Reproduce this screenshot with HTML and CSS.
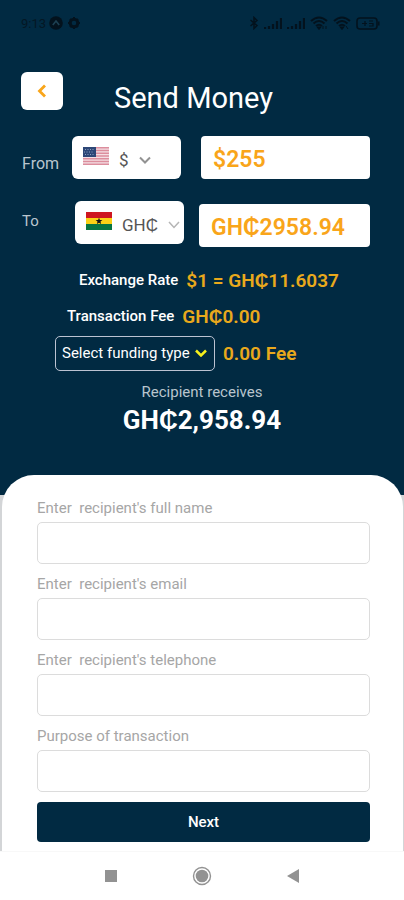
FILE: index.html
```html
<!DOCTYPE html>
<html lang="en">
<head>
<meta charset="utf-8">
<meta name="viewport" content="width=device-width, initial-scale=1">
<title>Send Money</title>
<link rel="stylesheet" href="styles.css">
</head>
<body>
<div class="status">
  <span class="status-time">9:13</span>
  <svg class="status-app" width="14" height="14" viewBox="0 0 14 14"><circle cx="7" cy="7" r="6.8" fill="#03121d"/><path d="M3.8 9 7 5l3.2 4" fill="none" stroke="#1d4052" stroke-width="1.6"/></svg>
  <svg width="12" height="12" viewBox="0 0 12 12"><circle cx="6" cy="6" r="3.8" fill="none" stroke="#03121d" stroke-width="3"/><path d="M6 0v2M6 10v2M0 6h2M10 6h2M2 2l1 1M9 9l1 1M2 10l1-1M9 3l1-1" stroke="#03121d" stroke-width="2"/></svg>
  <div class="status-right">
    <svg width="10" height="14" viewBox="0 0 10 14"><path d="M1.5 4 8 9.500 5 12.500v-11L8 4.500 1.500 10" fill="none" stroke="#03121d" stroke-width="1.500"/></svg>
    <svg width="18" height="12" viewBox="0 0 18 12"><path d="M1 12v-2M5 12V9M9 12V7M13 12V4M17 12V1" stroke="#03121d" stroke-width="2.200"/></svg>
    <svg width="18" height="12" viewBox="0 0 18 12"><path d="M1 12v-2M5 12V9M9 12V7M13 12V4M17 12V1" stroke="#03121d" stroke-width="2.200"/></svg>
    <svg width="18" height="14" viewBox="0 0 18 14"><path d="M1 5q8-7 16 0M3.500 7.500q5.500-5 11 0M6 10q3-2.500 6 0" fill="none" stroke="#03121d" stroke-width="2"/><path d="m7 11 2 2.500 2-2.500zM13 10v3M16 10v3" fill="#03121d" stroke="#03121d"/></svg>
    <svg width="18" height="14" viewBox="0 0 18 14"><path d="M1 5q8-7 16 0M3.500 7.500q5.500-5 11 0M6 10q3-2.500 6 0" fill="none" stroke="#03121d" stroke-width="2"/><path d="m7 11 2 2.500 2-2.500zM13 10l2 3" fill="#03121d" stroke="#03121d"/></svg>
    <svg width="24" height="13" viewBox="0 0 24 13"><rect x="1" y="1" width="20" height="11" rx="3" fill="none" stroke="#03121d" stroke-width="1.600"/><path d="M22.800 4.500v4" stroke="#03121d" stroke-width="1.500"/><path d="M6 6.500h5M9 4v5M13 4h4M13 6.500h4v2.500h-4" fill="none" stroke="#03121d" stroke-width="1.200"/></svg>
  </div>
</div>

<header class="header">
  <button class="back" type="button" aria-label="Back">
    <svg width="10" height="14" viewBox="0 0 10 14"><path d="M8 1.500 2.500 7 8 12.500" fill="none" stroke="#f9a51a" stroke-width="2.800"/></svg>
  </button>
  <h1 class="title">Send Money</h1>
</header>

<main>
  <section class="convert">
    <div class="row">
      <label class="row-label" for="from-currency">From</label>
      <div class="currency">
        <svg width="26" height="18" viewBox="0 0 26 18"><path fill="#f5dfe4" d="M0 0h26v18H0z"/><path d="M0 .7h26M0 3.500h26M0 6.300h26M0 9h26M0 11.800h26M0 14.500h26M0 17.300h26" stroke="#dc8e9d" stroke-width="1.400"/><path fill="#2d4777" d="M0 0h13v10H0z"/><path d="M2 2.500h10M1 5h10M2 7.500h10" stroke="#8ca0c2" stroke-dasharray="1 1.500"/></svg>
        <select id="from-currency" class="currency-select currency-usd"><option>$</option></select>
        <svg width="12" height="8" viewBox="0 0 12 8"><path d="m1 1.500 5 5 5-5" fill="none" stroke="#929292" stroke-width="2"/></svg>
      </div>
      <input class="amount" aria-label="Amount to send" value="$255">
    </div>
    <div class="row row-to">
      <label class="row-label" for="to-currency">To</label>
      <div class="currency">
        <svg width="26" height="18" viewBox="0 0 26 18"><path fill="#ce1620" d="M0 0h26v6H0z"/><path fill="#fbd116" d="M0 6h26v6H0z"/><path fill="#087542" d="M0 12h26v6H0z"/><path d="m13 5.700.9 2.200 2.500.2-1.900 1.500.6 2.400-2.100-1.300-2.100 1.300.6-2.400-1.900-1.500 2.500-.2z" fill="#161616"/></svg>
        <select id="to-currency" class="currency-select"><option>GH₵</option></select>
        <svg width="12" height="8" viewBox="0 0 12 8"><path d="m1 1 5 5.500L11 1" fill="none" stroke="#b5b5b5" stroke-width="1.500"/></svg>
      </div>
      <input class="amount" aria-label="Amount received" value="GH₵2958.94">
    </div>
  </section>

  <section class="summary">
    <p class="line line-rate"><span class="line-name">Exchange Rate</span><span class="line-value">$1 = GH₵11.6037</span></p>
    <p class="line line-fee"><span class="line-name">Transaction Fee</span><span class="line-value">GH₵0.00</span></p>
    <div class="line line-funding">
      <div class="funding">
        <select class="funding-select" aria-label="Funding type"><option>Select funding type</option></select>
        <svg class="funding-arrow" width="12" height="8" viewBox="0 0 12 8"><path d="m1 1.500 5 5 5-5" fill="none" stroke="#f6f01c" stroke-width="2.500"/></svg>
      </div>
      <span class="line-value">0.00 Fee</span>
    </div>
    <p class="receives">Recipient receives</p>
    <p class="total">GH₵2,958.94</p>
  </section>

  <div class="sheet-edge">
    <form class="sheet">
      <div class="field"><label for="name">Enter&nbsp; recipient's full name</label><input id="name" type="text"></div>
      <div class="field"><label for="email">Enter&nbsp; recipient's email</label><input id="email" type="email"></div>
      <div class="field"><label for="phone">Enter&nbsp; recipient's telephone</label><input id="phone" type="tel"></div>
      <div class="field"><label for="purpose">Purpose of transaction</label><input id="purpose" type="text"></div>
      <button class="next" type="button">Next</button>
    </form>
  </div>
</main>

<nav class="system-nav">
  <button type="button" aria-label="Recent apps"><svg width="20" height="20" viewBox="0 0 20 20"><path d="M4 4h12v12H4z" fill="#929292"/></svg></button>
  <button type="button" aria-label="Home"><svg width="20" height="20" viewBox="0 0 20 20"><circle cx="10" cy="10" r="8.500" fill="none" stroke="#929292" stroke-width="1.400"/><circle cx="10" cy="10" r="6.300" fill="#929292"/></svg></button>
  <button type="button" aria-label="Go back"><svg width="20" height="20" viewBox="0 0 20 20"><path d="M16 3v14L4 10z" fill="#929292"/></svg></button>
</nav>
</body>
</html>
```
FILE: styles.css
```css
* {
  box-sizing: border-box;
}

body {
  margin: 0;
  min-height: 100vh;
  background: #012a42;
  color: #fff;
  font-family: Roboto, "Liberation Sans", sans-serif;
}

h1,
p {
  margin: 0;
}

button,
input,
select {
  font-family: inherit;
  margin: 0;
}

svg {
  display: block;
  flex: none;
}

.status {
  display: flex;
  align-items: center;
  gap: 6px;
  height: 46px;
  padding: 0 24px 0 21px;
}

.status-time {
  color: #041724;
  font-size: 13px;
}

.status-time + .status-app {
  margin: 0 -1px 0 -3px;
}

.status-right {
  display: flex;
  align-items: center;
  gap: 5px;
  margin-left: auto;
}

.header {
  display: flex;
  align-items: center;
  gap: 51px;
  padding: 24px 21px 0;
}

.back {
  display: flex;
  align-items: center;
  justify-content: center;
  width: 42px;
  height: 38px;
  padding: 0;
  border: 0;
  border-radius: 6px;
  background: #fff;
}

.title {
  padding-top: 14px;
  font-size: 29px;
  line-height: 28px;
  font-weight: 400;
}

.convert {
  display: grid;
  gap: 22px;
  padding: 24px 34px 0 22px;
}

.row {
  display: grid;
  grid-template-columns: 50px 109px 1fr;
  align-items: center;
}

.row-to {
  grid-template-columns: 53px 109px 1fr;
  align-items: start;
}

.row-label {
  padding-top: 12px;
  color: #b9c5ce;
  font-size: 16px;
  line-height: 20px;
}

.row-to .row-label {
  padding-top: 10px;
  font-size: 15px;
}

.currency {
  display: flex;
  align-items: center;
  gap: 10px;
  height: 43px;
  padding: 4px 10px 0 11px;
  border-radius: 6px;
  background: #fff;
}

.currency > svg:first-child {
  margin-bottom: 8px;
}

.currency-select {
  appearance: none;
  width: 36px;
  padding: 0;
  border: 0;
  background: transparent;
  color: #555;
  font-size: 17px;
}

.currency-usd {
  width: 10px;
}

.amount {
  width: auto;
  min-width: 0;
  height: 43px;
  margin-left: 20px;
  padding: 4px 12px 0;
  border: 0;
  border-radius: 4px;
  background: #fff;
  color: #f9a51a;
  font-size: 23px;
  font-weight: 600;
}

.row-to .amount {
  margin: 3px 0 0 15px;
}

.summary {
  display: flex;
  flex-direction: column;
  padding-top: 15px;
}

.line {
  display: flex;
  align-items: center;
  gap: 8px;
  height: 36px;
}

.line-rate {
  padding-left: 79px;
}

.line-fee {
  padding-left: 67px;
}

.line-funding {
  height: 38px;
  padding-left: 55px;
}

.line-name {
  font-size: 15px;
  font-weight: 500;
}

.line-value {
  color: #e9a91c;
  font-size: 19px;
  font-weight: 600;
}

.funding {
  display: grid;
  grid-template-columns: 1fr;
  align-items: center;
  width: 160px;
  height: 35px;
}

.funding-select {
  grid-area: 1 / 1;
  appearance: none;
  width: 100%;
  height: 35px;
  padding: 0 6px;
  border: 1px solid #bcc3d2;
  border-radius: 5px;
  background: transparent;
  color: #fff;
  font-size: 15px;
  font-weight: 400;
}

.funding-arrow {
  grid-area: 1 / 1;
  justify-self: end;
  margin-right: 8px;
  pointer-events: none;
}

.receives {
  padding-top: 10px;
  color: #b9c5ce;
  font-size: 15px;
  line-height: 20px;
  text-align: center;
}

.total {
  font-size: 26px;
  line-height: 36px;
  font-weight: 700;
  text-align: center;
}

.sheet-edge {
  margin-top: 37px;
  padding: 0 1px 0 2px;
  background: linear-gradient(#012a42 20px, #d3d5d7 20px);
}

.sheet {
  display: grid;
  gap: 10px;
  padding: 23px 33px 9px 35px;
  border-radius: 32px 32px 0 0;
  background: #fff;
}

.field {
  display: grid;
  gap: 4px;
}

.field label {
  color: #a6a6a6;
  font-size: 15px;
  line-height: 20px;
}

.field input {
  width: 100%;
  height: 42px;
  padding: 0 12px;
  border: 1px solid #dcdcdc;
  border-radius: 5px;
  background: #fff;
  color: #333;
  font-size: 15px;
}

.next {
  height: 40px;
  border: 0;
  border-radius: 4px;
  background: #012a42;
  color: #fff;
  font-size: 15px;
  font-weight: 500;
}

.system-nav {
  display: flex;
  align-items: center;
  justify-content: center;
  gap: 71px;
  height: 49px;
  border-top: 1px solid #f8f8f8;
  background: #fff;
}

.system-nav button {
  padding: 0;
  border: 0;
  background: none;
}
```
